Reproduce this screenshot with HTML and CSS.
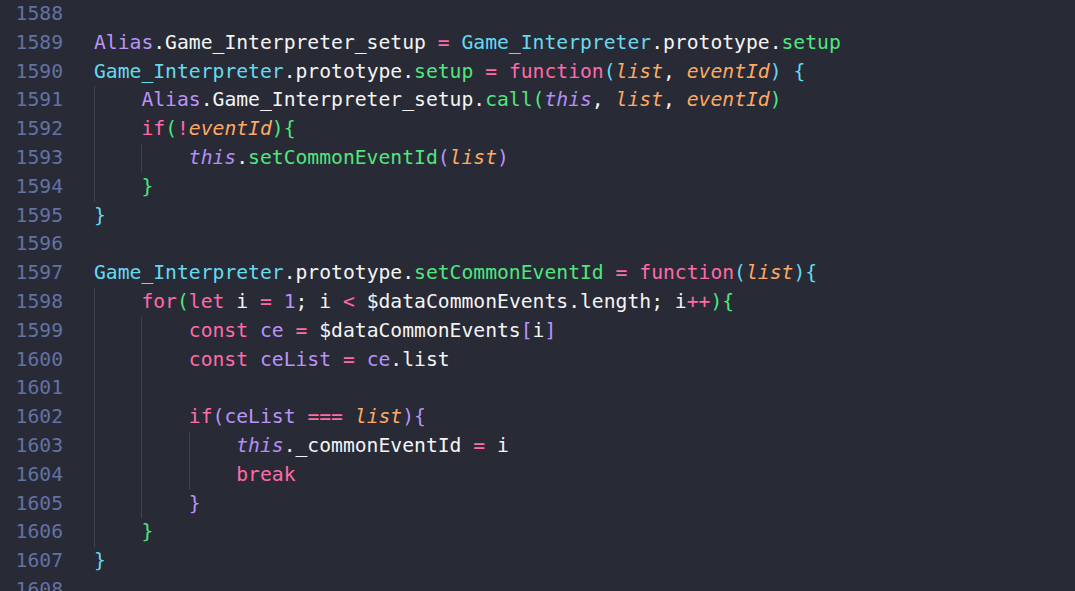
FILE: index.html
```html
<!DOCTYPE html>
<html>
<head>
<meta charset="utf-8">
<link rel="stylesheet" href="styles.css">
</head>
<body>
<div class="editor">
  <div class="line"><span class="ln">1588</span><span class="code"></span></div>
  <div class="line"><span class="ln">1589</span><span class="code"><span class="pu">Alias</span>.Game_Interpreter_setup <span class="pk">=</span> <span class="cy">Game_Interpreter</span>.prototype.<span class="gr">setup</span></span></div>
  <div class="line"><span class="ln">1590</span><span class="code"><span class="cy">Game_Interpreter</span>.prototype.<span class="gr">setup</span> <span class="pk">=</span> <span class="pk">function</span><span class="cy">(</span><span class="or">list</span>, <span class="or">eventId</span><span class="cy">)</span> <span class="cy">{</span></span></div>
  <div class="line"><span class="ln">1591</span><span class="code"><span class="ind"></span><span class="pu">Alias</span>.Game_Interpreter_setup.<span class="gr">call</span><span class="gr">(</span><span class="th">this</span>, <span class="or">list</span>, <span class="or">eventId</span><span class="gr">)</span></span></div>
  <div class="line"><span class="ln">1592</span><span class="code"><span class="ind"></span><span class="pk">if</span><span class="gr">(</span><span class="pk">!</span><span class="or">eventId</span><span class="gr">){</span></span></div>
  <div class="line"><span class="ln">1593</span><span class="code"><span class="ind"></span><span class="ind"></span><span class="th">this</span>.<span class="gr">setCommonEventId</span><span class="pu">(</span><span class="or">list</span><span class="pu">)</span></span></div>
  <div class="line"><span class="ln">1594</span><span class="code"><span class="ind"></span><span class="gr">}</span></span></div>
  <div class="line"><span class="ln">1595</span><span class="code"><span class="cy">}</span></span></div>
  <div class="line"><span class="ln">1596</span><span class="code"></span></div>
  <div class="line"><span class="ln">1597</span><span class="code"><span class="cy">Game_Interpreter</span>.prototype.<span class="gr">setCommonEventId</span> <span class="pk">=</span> <span class="pk">function</span><span class="cy">(</span><span class="or">list</span><span class="cy">){</span></span></div>
  <div class="line"><span class="ln">1598</span><span class="code"><span class="ind"></span><span class="pk">for</span><span class="gr">(</span><span class="pk">let</span> i <span class="pk">=</span> <span class="pu">1</span>; i <span class="pk">&lt;</span> $dataCommonEvents.length; i<span class="pk">++</span><span class="gr">){</span></span></div>
  <div class="line"><span class="ln">1599</span><span class="code"><span class="ind"></span><span class="ind"></span><span class="pk">const</span> <span class="pu">ce</span> <span class="pk">=</span> $dataCommonEvents<span class="pu">[</span>i<span class="pu">]</span></span></div>
  <div class="line"><span class="ln">1600</span><span class="code"><span class="ind"></span><span class="ind"></span><span class="pk">const</span> <span class="pu">ceList</span> <span class="pk">=</span> <span class="pu">ce</span>.list</span></div>
  <div class="line"><span class="ln">1601</span><span class="code"><span class="ind"></span><span class="ind"></span></span></div>
  <div class="line"><span class="ln">1602</span><span class="code"><span class="ind"></span><span class="ind"></span><span class="pk">if</span><span class="pu">(</span><span class="pu">ceList</span> <span class="pk">===</span> <span class="or">list</span><span class="pu">){</span></span></div>
  <div class="line"><span class="ln">1603</span><span class="code"><span class="ind"></span><span class="ind"></span><span class="ind"></span><span class="th">this</span>._commonEventId <span class="pk">=</span> i</span></div>
  <div class="line"><span class="ln">1604</span><span class="code"><span class="ind"></span><span class="ind"></span><span class="ind"></span><span class="pk">break</span></span></div>
  <div class="line"><span class="ln">1605</span><span class="code"><span class="ind"></span><span class="ind"></span><span class="pu">}</span></span></div>
  <div class="line"><span class="ln">1606</span><span class="code"><span class="ind"></span><span class="gr">}</span></span></div>
  <div class="line"><span class="ln">1607</span><span class="code"><span class="cy">}</span></span></div>
  <div class="line"><span class="ln">1608</span><span class="code"></span></div>
</div>
</body>
</html>
```

FILE: styles.css
```css
html, body {
  margin: 0;
  padding: 0;
  background: #282a36;
  height: 100%;
  overflow: hidden;
}

.editor {
  font-family: "DejaVu Sans Mono", monospace;
  font-size: 19.7px;
  line-height: 28.8px;
  color: #f4f4f4;
}

.line {
  display: flex;
  height: 28.8px;
}

.ln {
  width: 63px;
  text-align: right;
  color: #6272a4;
  flex: none;
}

.code {
  display: block;
  margin-left: 31px;
  white-space: pre;
}

.ind {
  display: inline-block;
  width: 4ch;
  height: 28.8px;
  vertical-align: top;
  border-left: 1px solid #3f4253;
  box-sizing: border-box;
}

.pk { color: #ff6aa8; }
.cy { color: #67d9ef; }
.gr { color: #50e67c; }
.pu { color: #b994f8; }
.or { color: #ffa962; font-style: italic; }
.th { color: #b48ef7; font-style: italic; }
```
